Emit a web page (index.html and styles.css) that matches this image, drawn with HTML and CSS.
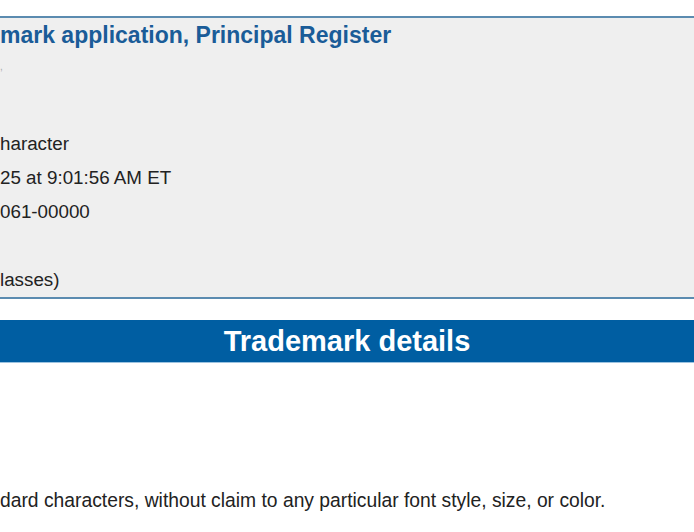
FILE: index.html
```html
<!DOCTYPE html>
<html lang="en">
<head>
    <meta charset="UTF-8">
    <meta name="viewport" content="width=device-width, initial-scale=1.0">
    <title>Trademark status</title>
    <link rel="stylesheet" href="styles.css">
</head>
<body>
    <div class="summary">
        <h2 class="summary-title">mark application, Principal Register</h2>
        <div class="summary-rows">
            <div class="row row-short"><span class="mark">,</span></div>
            <div class="row"></div>
            <div class="row">haracter</div>
            <div class="row">25 at 9:01:56 AM ET</div>
            <div class="row">061-00000</div>
            <div class="row"></div>
            <div class="row">lasses)</div>
        </div>
    </div>

    <div class="section-bar">Trademark details</div>

    <div class="details">
        <p class="details-text">dard characters, without claim to any particular font style, size, or color.</p>
    </div>
</body>
</html>
```

FILE: styles.css
```css
body {
    margin: 0;
    font-family: "Liberation Sans", Arial, sans-serif;
    color: #222;
    background-color: #fff;
    overflow: hidden;
}
.summary {
    margin-top: 16px;
    height: 279px;
    background-color: #efefef;
    border-top: 2px solid #5b8bb0;
    border-bottom: 2px solid #5b8bb0;
}
.summary-title {
    margin: 0;
    padding-top: 3px;
    font-size: 23px;
    line-height: 28px;
    color: #1a5c98;
}
.summary-rows {
    font-size: 18.8px;
}
.row {
    height: 34px;
    line-height: 34px;
}
.row-short {
    height: 44px;
    line-height: 30px;
}
.mark {
    color: #aaa;
    font-size: 10px;
}
.section-bar {
    margin-top: 21px;
    height: 42px;
    line-height: 42px;
    background-color: #005ea2;
    border-bottom: 1px solid #9cc3e0;
    color: #fff;
    font-size: 29px;
    font-weight: bold;
    text-align: center;
}
.details {
    padding-top: 126px;
}
.details-text {
    margin: 0;
    font-size: 19.3px;
    line-height: 24px;
}
```
